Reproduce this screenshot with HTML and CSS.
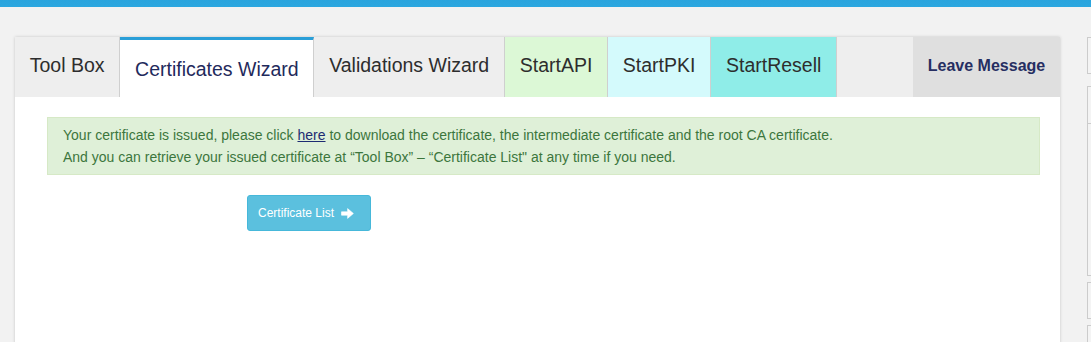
FILE: index.html
```html
<!DOCTYPE html>
<html>
<head>
<meta charset="utf-8">
<link rel="stylesheet" href="styles.css">
</head>
<body>
<div class="topbar"></div>
<div class="page">
  <div class="panel">
    <div class="tabs">
      <div class="tab">Tool Box</div>
      <div class="tab active">Certificates Wizard</div>
      <div class="tab">Validations Wizard</div>
      <div class="tab api">StartAPI</div>
      <div class="tab pki">StartPKI</div>
      <div class="tab resell">StartResell</div>
      <div class="spacer"></div>
      <div class="tab leave">Leave Message</div>
    </div>
    <div class="content">
      <div class="alert">
        Your certificate is issued, please click <a href="#">here</a> to download the certificate, the intermediate certificate and the root CA certificate.<br>
        And you can retrieve your issued certificate at “Tool Box” – “Certificate List" at any time if you need.
      </div>
      <div class="actions">
        <button class="btn">Certificate List
          <svg class="arrow" width="13" height="11" viewBox="0 0 13 11"><path d="M0.5 3.8H6.6V0.6L12.4 5.5 6.6 10.4V7.2H0.5Z" fill="#fff" stroke="#fff" stroke-width="0.6" stroke-linejoin="round"/></svg>
        </button>
      </div>
    </div>
  </div>
  <div class="side">
    <div class="sbox b1"></div>
    <div class="sbox b2"><div class="divider"></div></div>
    <div class="sbox b3"></div>
    <div class="sbox b4"></div>
  </div>
</div>
</body>
</html>
```
FILE: styles.css
```css
html, body {
  margin: 0;
  padding: 0;
  background: #f2f2f2;
  font-family: "Liberation Sans", Arial, sans-serif;
  overflow: hidden;
}
.topbar {
  height: 7px;
  background: linear-gradient(#2aa4dd, #2ba7e0);
}
.page {
  display: flex;
  align-items: flex-start;
  padding: 30px 0 0 15px;
  gap: 27px;
}
.panel {
  width: 1045px;
  height: 320px;
  background: #fff;
  box-shadow: 0 0 3px rgba(0,0,0,0.18);
  flex-shrink: 0;
}
.tabs {
  display: flex;
  height: 60px;
  background: #eeeeee;
}
.tab {
  display: flex;
  align-items: center;
  padding: 0 14.75px 4px;
  font-size: 19.5px;
  color: #2d2d2d;
  border-right: 1px solid #cfcfcf;
  box-sizing: border-box;
}
.tab.active {
  background: #fff;
  color: #1f2a5c;
  border-top: 3px solid #2a9fd8;
  padding-bottom: 0;
  padding-top: 2px;
}
.tab.api { background: #dcf8d6; }
.tab.pki { background: #d4fafc; }
.tab.resell { background: #8fede8; }
.spacer {
  flex: 1;
}
.tab.leave {
  background: #dfdfdf;
  border-right: none;
  font-size: 16px;
  font-weight: bold;
  color: #262e62;
  width: 147px;
  justify-content: center;
  padding: 0 0 3px 0;
}
.content {
  padding: 20px 20px 0 32px;
}
.alert {
  background: #dff0d8;
  border: 1px solid #d6e9c6;
  color: #3c763d;
  font-size: 14px;
  line-height: 22px;
  padding: 6px 15px;
}
.alert a {
  color: #1d2b72;
  text-decoration: underline;
}
.actions {
  padding: 20px 0 0 200px;
}
.btn {
  display: inline-flex;
  align-items: center;
  gap: 7px;
  width: 124px;
  height: 36px;
  background: #5bc0de;
  border: 1px solid #46b8da;
  border-radius: 3px;
  color: #fff;
  font-family: "Liberation Sans", Arial, sans-serif;
  font-size: 12px;
  padding: 0 0 0 10px;
  box-sizing: border-box;
}
.arrow { display: block; }
.side {
  display: flex;
  flex-direction: column;
  flex-shrink: 0;
  width: 40px;
}
.sbox {
  background: #f4f4f4;
  border: 1px solid #cccccc;
  border-right: none;
  box-sizing: border-box;
}
.b1 { height: 37px; margin-top: 0; }
.b2 { height: 190px; margin-top: 12px; }
.b3 { height: 37px; margin-top: 6px; }
.b4 { height: 40px; margin-top: 6px; }
.divider {
  margin-top: 36px;
  border-top: 1px solid #cccccc;
}
```
